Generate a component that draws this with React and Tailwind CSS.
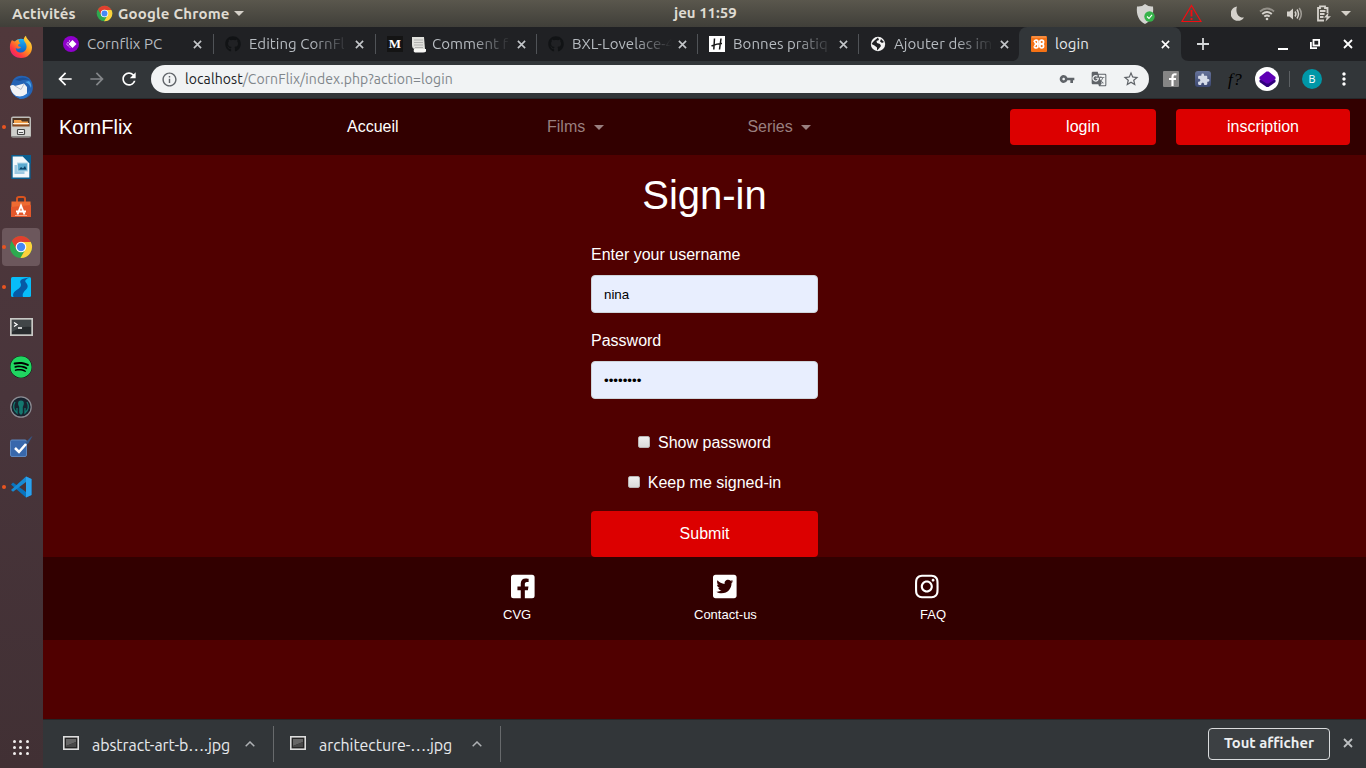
import React from "react";
import {
  FaFacebookSquare,
  FaTwitterSquare,
  FaInstagram,
  FaGithub,
  FaSpotify,
} from "react-icons/fa";
import {
  MdVpnKey,
  MdGTranslate,
  MdStarBorder,
  MdOutlineInfo,
  MdArrowBack,
  MdArrowForward,
  MdRefresh,
  MdMoreVert,
  MdExtension,
} from "react-icons/md";

const UI = "font-['Ubuntu','Noto_Sans',sans-serif]";

function ChromeLogo({ className }) {
  return (
    <svg viewBox="0 0 48 48" className={className}>
      <circle cx="24" cy="24" r="22" fill="#2da94f" />
      <path d="M43.6 14A22 22 0 0 1 22.86 45.97L32.66 29 24 14Z" fill="#fdd23b" />
      <path d="M43.6 14H24L15.34 29 5.54 12.03A22 22 0 0 1 43.6 14Z" fill="#e0402f" />
      <circle cx="24" cy="24" r="10.6" fill="#fff" />
      <circle cx="24" cy="24" r="8.4" fill="#4688f4" />
    </svg>
  );
}

function Cross({ className }) {
  return (
    <svg viewBox="0 0 10 10" className={className} fill="none" stroke="currentColor" strokeWidth="1.8">
      <path d="M1 1L9 9M9 1L1 9" />
    </svg>
  );
}

function TopBar() {
  return (
    <header className={`${UI} flex h-[27px] shrink-0 items-center bg-linear-to-b from-[#5a574d] to-[#403f39] text-[15px] font-bold text-[#dfdbd2]`}>
      <div className="w-[96px] pt-px pl-3 tracking-[0.15px]">Activités</div>
      <ChromeLogo className="h-[17px] w-[17px]" />
      <div className="ml-[5px] w-[111px] pt-px whitespace-nowrap tracking-[0.2px]">Google Chrome</div>
      <svg viewBox="0 0 10 5" className="ml-[5px] h-[5px] w-[10px]"><path d="M0 0H10L5 5Z" fill="#d5d1c9" /></svg>
      <div className="ml-[430px] w-[70px] whitespace-nowrap">jeu 11:59</div>
      <div className="ml-auto flex items-center pr-[15px]">
        <svg viewBox="0 0 20 22" className="h-[22px] w-[20px]">
          <path d="M9 1Q13 4 17 3.5C18 12 15 18 9 21 3 18 0 12 1 3.5Q6 4 9 1Z" fill="#d3d3d0" />
          <circle cx="13.5" cy="13.5" r="5.2" fill="#35b34a" />
          <path d="M11 13.5l2 2 3-3.6" fill="none" stroke="#fff" strokeWidth="1.1" />
        </svg>
        <svg viewBox="0 0 21 19" className="ml-[25px] h-[19px] w-[21px]" fill="none" stroke="#f20d12">
          <path d="M10.5 1.5L20 17.5H1Z" strokeWidth="1.2" />
          <path d="M10.5 6V12.5M10.5 14V16" strokeWidth="1.9" />
        </svg>
        <svg viewBox="0 0 14 15" className="ml-[29px] h-[15px] w-[14px]"><path d="M6 .5A7.2 7.2 0 1 0 13 11.5C8 12.5 3.8 7 6 .5Z" fill="#d5d2cc" /></svg>
        <svg viewBox="0 0 16 14" className="ml-[14px] h-[14px] w-[16px]" fill="none" stroke="#d5d2cc" strokeWidth="1.9">
          <path d="M1 4.5Q8-1.5 15 4.5" opacity=".5" />
          <path d="M3.2 7Q8 3 12.8 7" /><path d="M5.3 9.5Q8 7.3 10.7 9.5" />
          <circle cx="8" cy="12" r="1.3" fill="#d5d2cc" stroke="none" />
        </svg>
        <svg viewBox="0 0 17 14" className="ml-[11px] h-[14px] w-[17px]" fill="none" stroke="#d5d2cc" strokeWidth="1.5">
          <path d="M1 4.5H3.5L7 1.5V12.5L3.5 9.5H1Z" fill="#d5d2cc" stroke="none" />
          <path d="M9 4.5Q10.8 7 9 9.5M11 2.5Q14 7 11 11.5" /><path d="M13.2 1Q17.4 7 13.2 13" opacity=".6" />
        </svg>
        <svg viewBox="0 0 16 17" className="ml-[13px] h-[17px] w-[16px]" fill="none" stroke="#d5d2cc" strokeWidth="1.8">
          <path d="M8 15.5H2V3H4V1.3H9V3H11.5V8" /><path d="M4 6H9.5M4 9H8.5M4 12H7.5" />
          <path d="M12.5 7.5L8 12.5H10.7L9.5 16.5 15 11.2H12Z" fill="#d5d2cc" stroke="none" />
        </svg>
        <svg viewBox="0 0 10 5" className="ml-[9px] h-[5px] w-[10px]"><path d="M0 0H10L5 5Z" fill="#d5d1c9" /></svg>
      </div>
    </header>
  );
}

function FirefoxIcon() {
  return (
    <svg viewBox="0 0 24 24" className="h-[24px] w-[24px]">
      <defs>
        <linearGradient id="ffx" x1="1" y1="0" x2="0.1" y2="1">
          <stop offset="0" stopColor="#fff14a" /><stop offset=".45" stopColor="#ff9a1e" /><stop offset=".75" stopColor="#ff3b3f" /><stop offset="1" stopColor="#e3168b" />
        </linearGradient>
        <linearGradient id="ffb" x1="0" y1="0" x2="0" y2="1"><stop offset="0" stopColor="#1eb5f5" /><stop offset="1" stopColor="#0a4ac0" /></linearGradient>
      </defs>
      <circle cx="12" cy="12.2" r="8.5" fill="url(#ffb)" />
      <path d="M3 5C1 8 .7 11 1 14 2 20 7 23 12 23 19 23 23 18 23 12.500 23 8 20 6 18.500 4 17 2 17 1 17 .8 14 3 14.500 5.500 16.500 8 19 12 17 17.500 12 17.500 8.500 17.500 6.500 15.500 6.800 13 9 14.500 11 13.500 12 12.300 10.500 11.500 9 11.700 9 10 9 9 11 9 11.500 8 10 7.200 9.500 6.600 9.800 4.500 8.500 4.600 7 5.300 6 6.500 4.500 6 3.500 5.800 3 5Z" fill="url(#ffx)" />
    </svg>
  );
}

function ThunderbirdIcon() {
  return (
    <svg viewBox="0 0 25 25" className="h-[25px] w-[25px]">
      <path d="M4 5C7 0 15-.5 20 3 25 8 26 18 18 22.500 12 25.500 3 22 1.500 14 1.200 10 3 8 4 5Z" fill="#2463b5" />
      <path d="M6 5Q14 0 21 5 15 4 11 6Z" fill="#1c4f96" />
      <path d="M16 7Q20 8 22 13 23 9 20 6Z" fill="#48a0e6" />
      <path d="M1 11Q4 9 6 11L15 8.500 18 12 18 19Q14 23 7 21 2 18 1 11Z" fill="#f1f2f5" />
      <path d="M6 11L12 14.500 15 9" fill="none" stroke="#b6bdca" />
      <path d="M4 20Q14 25 21 15 20 24 11 24Z" fill="#2b75cb" />
    </svg>
  );
}

function FilesIcon() {
  return (
    <svg viewBox="0 0 22 22" className="h-[22px] w-[22px]">
      <rect x="1" y=".5" width="20" height="21" rx="2" fill="#bdbdba" />
      <rect x="2.500" y="2" width="17" height="9" fill="#4b3425" />
      <path d="M4 4H11L12 5.500H18V9H4Z" fill="#f3a04a" /><path d="M3 7H19V8.500H3Z" fill="#fff0dc" /><path d="M3 8.500H19V11H3Z" fill="#8a4a20" />
      <path d="M2 10.500H20V20H2Z" fill="#cfcfcc" /><rect x="7.500" y="13.500" width="7" height="5" rx=".8" fill="#eee" stroke="#444" strokeWidth="1.200" /><path d="M9 16.500H13" stroke="#555" />
      <path d="M1.500 20.800H20.500" stroke="#777" />
    </svg>
  );
}

function WriterIcon() {
  return (
    <svg viewBox="0 0 20 24" className="h-[24px] w-[20px]">
      <path d="M1 .7H12L19 8V23.300H1Z" fill="#f3f8fb" stroke="#0b5f90" strokeWidth="1.400" /><path d="M11 0H20V9Z" fill="#0b5f90" />
      <rect x="3.500" y="10" width="10" height="9" fill="#9cc9e3" /><rect x="6.500" y="8" width="10" height="8" fill="#5ba9cf" stroke="#b3d7e8" />
      <path d="M8 14.500L10 12 12 13.500 14 11 15.500 14.500Z" fill="#083f65" />
    </svg>
  );
}

function StoreIcon() {
  return (
    <svg viewBox="0 0 22 22" className="h-[22px] w-[22px]">
      <path d="M7 6V2.500Q7 1 9 1H13Q15 1 15 2.500V6" fill="none" stroke="#d9531e" strokeWidth="2" />
      <path d="M1.500 5.500H20.500L21 21H1Z" fill="#ee6b32" /><path d="M1 11L21 9V21H1Z" fill="#e3572a" />
      <path d="M7.500 18.500L11 9.500 14.500 18.500M6 15.500H16" fill="none" stroke="#fff" strokeWidth="1.900" /><path d="M5 19.500H17" stroke="#f5aa8c" />
    </svg>
  );
}

function RiverIcon() {
  return (
    <svg viewBox="0 0 20 20" className="h-[20px] w-[20px]">
      <rect width="20" height="20" rx="1.500" fill="#08bdf9" />
      <path d="M19 .5C12 1 8 3 9.500 6 11 9 9 11 5 13.500 2 15.500 1.500 18 2.500 20H12C11 16.500 13 14.500 15.500 12 18 9 16 7 14.500 5 13.500 3 16 1.500 19 .5Z" fill="#075aa5" />
    </svg>
  );
}

function TerminalIcon() {
  return (
    <svg viewBox="0 0 23 18" className="h-[18px] w-[23px]">
      <rect x=".8" y=".8" width="21.400" height="16.400" fill="#282c2e" stroke="#c8c8c5" strokeWidth="1.800" />
      <path d="M2 2H21V9Q11 8 2 14Z" fill="#414648" /><path d="M4 4.500L7 6.500 4 8.500M8 10H12" fill="none" stroke="#fff" strokeWidth="1.300" />
    </svg>
  );
}

function KrakenIcon() {
  return (
    <svg viewBox="0 0 22 22" className="h-[22px] w-[22px]" fill="none">
      <circle cx="11" cy="11" r="10.200" fill="#17232f" stroke="#8d8d94" strokeWidth="1.200" />
      <path d="M11 4.500C7.500 4.500 7.500 8 9.200 11V17L11 19 12.800 17V11C14.500 8 14.500 4.500 11 4.500Z" fill="#14786f" />
      <path d="M5 6Q1.500 12 7 17V12M17 6Q20.500 12 15 17V12" stroke="#14786f" strokeWidth="1.300" />
    </svg>
  );
}

function TodoIcon() {
  return (
    <svg viewBox="0 0 24 22" className="h-[22px] w-[24px]">
      <rect x="1.500" y="4" width="16" height="16.500" rx="1.500" fill="#3868ac" stroke="#5d87bf" />
      <path d="M16 7L22 1 23.500 0 19 8Z" fill="#345a8c" /><path d="M6 12L10 16 17 8" fill="none" stroke="#fff" strokeWidth="2.500" />
    </svg>
  );
}

function CodeIcon() {
  return (
    <svg viewBox="0 0 22 22" className="h-[22px] w-[22px]">
      <path d="M16 .5L21.500 3V19L16 21.500 1 8.500 3 6.500 16 16Z" fill="#0873bd" />
      <path d="M1 14L16 .5V6L3 15.800Z" fill="#168bd5" /><path d="M16 .5L21.500 3V19L16 21.500Z" fill="#2ba2ee" />
    </svg>
  );
}

const dock = [
  { icon: <FirefoxIcon /> },
  { icon: <ThunderbirdIcon /> },
  { icon: <FilesIcon />, running: true },
  { icon: <WriterIcon /> },
  { icon: <StoreIcon /> },
  { icon: <ChromeLogo className="h-[24px] w-[24px]" />, running: true, active: true },
  { icon: <RiverIcon />, running: true },
  { icon: <TerminalIcon /> },
  { icon: <div className="rounded-full bg-black"><FaSpotify className="h-[22px] w-[22px] text-[#20d661]" /></div> },
  { icon: <KrakenIcon /> },
  { icon: <TodoIcon /> },
  { icon: <CodeIcon />, running: true },
];

function Dock() {
  return (
    <aside className="flex w-[43px] shrink-0 flex-col bg-linear-to-b from-[#50383b] via-[#49353b] to-[#413034]">
      {dock.map((d, i) => (
        <div key={i} className="flex h-[40px] shrink-0 items-center pl-[2px]">
          <div className={`relative flex h-[38px] w-[38px] items-center justify-center rounded-[4px] ${d.active ? "bg-[#6c575c]" : ""}`}>
            {d.running && <span className="absolute top-[17px] left-0 h-[4px] w-[4px] rounded-full bg-[#e95420]" />}
            {d.icon}
          </div>
        </div>
      ))}
      <div className="mt-auto mb-[13px] ml-[13px] grid w-[16px] grid-cols-3 gap-[3px]">
        {Array.from({ length: 9 }, (_, i) => <span key={i} className="h-[3px] w-[3px] rounded-full bg-[#f1eeee]" />)}
      </div>
    </aside>
  );
}

const tabs = [
  {
    title: "Cornflix PC",
    width: "w-[162px]",
    icon: (
      <svg viewBox="0 0 16 16" className="h-4 w-4 shrink-0"><circle cx="8" cy="8" r="8" fill="#8f00cc" /><path d="M9.500 4L13.500 8 9.500 12 5.500 8Z" fill="#fff" /><path d="M7 4.500L3.500 8 7 11.500" fill="none" stroke="#fff" strokeDasharray="1.500 .7" /></svg>
    ),
  },
  { title: "Editing CornFl", fade: true, width: "w-[162px]", icon: <FaGithub className="h-4 w-4 shrink-0 text-[#111315]" /> },
  {
    title: "Comment f",
    fade: true,
    width: "w-[161px]",
    page: true,
    icon: <div className="flex h-4 w-4 shrink-0 items-center justify-center bg-[#141414] font-['Liberation_Serif',serif] text-[13px] font-bold text-white">M</div>,
  },
  { title: "BXL-Lovelace-4", fade: true, width: "w-[161px]", icon: <FaGithub className="h-4 w-4 shrink-0 text-[#111315]" /> },
  {
    title: "Bonnes pratiq",
    fade: true,
    width: "w-[161px]",
    icon: <svg viewBox="0 0 16 16" className="h-4 w-4 shrink-0"><rect width="16" height="16" fill="#fff" /><path d="M5.500 2.500L4.800 13.500M12 2.500L10.500 13.500M2.500 10Q8 7.500 13 7.500" fill="none" stroke="#161616" strokeWidth="1.500" /></svg>,
  },
  {
    title: "Ajouter des im",
    fade: true,
    width: "w-[161px]",
    icon: <svg viewBox="0 0 16 16" className="h-4 w-4 shrink-0"><circle cx="8" cy="8" r="7.200" fill="#f3f3f3" /><path d="M8 1.500L9 4 6.500 5 7 7 10 8 11 10 9 12.500 7 14.500 7 11.500 4.500 9.500 1.500 8 3 6 5 4ZM11 3L14 6 12 7 10 5.500Z" fill="#202124" /></svg>,
  },
  {
    title: "login",
    active: true,
    width: "w-[162px]",
    icon: (
      <svg viewBox="0 0 16 16" className="h-4 w-4 shrink-0">
        <rect width="16" height="16" rx="1" fill="#f57215" />
        <path d="M1 1H15" stroke="#f9a669" />
        <g fill="none" stroke="#fff" strokeWidth="1.700">
          <circle cx="10.700" cy="6" r="1.900" /><circle cx="10.700" cy="10.100" r="1.900" />
          <path d="M3.200 6Q3.400 4.100 5.200 4.100 7 4.100 7 6 7 8 4.800 8 7 8 7 10.100 7 12 5.200 12 3.400 12 3.200 10.100M3.500 6L5 8 3.500 10M7 8H9" />
        </g>
      </svg>
    ),
  },
];

function PageEmoji() {
  return (
    <svg viewBox="0 0 16 17" className="mr-[5px] h-[17px] w-[16px] shrink-0">
      <path d="M1 1H13L14 13H4Q1 13 1 9Z" fill="#e0e0dc" /><path d="M3 13H15V15.500Q14 16.500 12 16.500H4Q2 16 3 13Z" fill="#f8f8f5" /><path d="M3 4H12M3 6.500H12M3 9H12M4 11.500H12" stroke="#a6a6a5" strokeWidth=".8" />
    </svg>
  );
}

function TabStrip() {
  return (
    <div className={`${UI} flex h-[34px] shrink-0 bg-[#202124] pl-2 text-[15px]`}>
      {tabs.map((t) => (
        <div
          key={t.title}
          className={`relative flex shrink-0 items-center ${t.width} ${t.active ? "rounded-t-[8px] bg-[#323639] text-[#e6e8ea]" : "text-[#b6bbc0]"}`}
        >
          <div className={`mr-[11px] h-[20px] w-px ${t.fade ? "bg-[#505357]" : ""}`} />
          {t.icon}
          <div className={`ml-[8px] flex w-[100px] items-center whitespace-nowrap tracking-[0.05px] ${t.fade ? "mask-r-from-62% mask-r-to-100%" : ""}`}>
            {t.page && <PageEmoji />}
            {t.title}
          </div>
          <Cross className={`ml-[5.500px] h-[9px] w-[9px] ${t.active ? "text-white" : "text-[#c3c6c9]"}`} />
          {t.active && (
            <>
              <svg viewBox="0 0 8 8" className="absolute bottom-0 -left-2 h-2 w-2"><path d="M8 0V8H0Q8 8 8 0Z" fill="#323639" /></svg>
              <svg viewBox="0 0 8 8" className="absolute -right-2 bottom-0 h-2 w-2"><path d="M0 0V8H8Q0 8 0 0Z" fill="#323639" /></svg>
            </>
          )}
        </div>
      ))}
      <div className="flex flex-1 items-center">
        <svg viewBox="0 0 12 12" className="ml-[16px] h-3 w-3"><path d="M6 0V12M0 6H12" stroke="#d5d8da" strokeWidth="1.800" /></svg>
        <div className="mt-[9px] ml-[69px] h-[2px] w-[10px] bg-white" />
        <svg viewBox="0 0 10 10" className="ml-[22px] h-[10px] w-[10px]" fill="none" stroke="#fff" strokeWidth="1.800"><rect x="3.500" y=".9" width="5.600" height="5.600" /><path d="M.9 3V9.100H7" /></svg>
        <Cross className="ml-[23px] h-[10px] w-[10px] text-white" />
      </div>
    </div>
  );
}

function Toolbar() {
  return (
    <div className={`${UI} flex h-[38px] shrink-0 items-center border-b border-[#25282a] bg-[#323639] pb-px`}>
      <MdArrowBack className="ml-[12px] h-[20px] w-[20px] text-white" />
      <MdArrowForward className="ml-[12px] h-[20px] w-[20px] text-[#84878a]" />
      <MdRefresh className="ml-[12px] h-[20px] w-[20px] text-white" />
      <div className="ml-[12px] flex h-[28px] w-[998px] items-center rounded-full bg-[#f1f3f4] pr-[9px] pl-[10px] text-[14px] text-[#80868b]">
        <MdOutlineInfo className="h-[17px] w-[17px] text-[#5f6368]" />
        <div className="ml-[7px] whitespace-nowrap tracking-[0.09px]"><span className="text-[#202124]">localhost</span>/CornFlix/index.php?action=login</div>
        <MdVpnKey className="ml-auto h-[16px] w-[16px] text-[#5f6368]" />
        <MdGTranslate className="ml-[16px] h-[16px] w-[16px] text-[#5f6368]" />
        <MdStarBorder className="ml-[15px] h-[18px] w-[18px] text-[#5f6368]" />
      </div>
      <svg viewBox="0 0 16 16" className="ml-[14px] h-4 w-4"><rect width="16" height="16" rx="1" fill="#858585" /><path d="M13.500 3.500Q9.500 2.500 9.500 6V15M6 8H13" fill="none" stroke="#fff" strokeWidth="2.200" /></svg>
      <div className="ml-[16px] flex h-4 w-4 items-center justify-center rounded-[3px] bg-linear-to-b from-[#66739a] to-[#3b4770]"><MdExtension className="h-[13px] w-[13px] text-[#d5dbe8]" /></div>
      <div className="ml-[17px] w-[16px] font-['Liberation_Serif',serif] text-[17px] leading-none tracking-[0.5px] text-black italic">f?</div>
      <div className="ml-[11px] flex h-6 w-6 items-center justify-center rounded-full bg-white">
        <svg viewBox="0 0 17 17" className="h-[17px] w-[17px]"><path d="M.5 9L2.500 8H14.500L16.500 9V11L9.500 16H7.500L.5 11Z" fill="#31007c" /><path d="M7.500 .5H9.500L16.500 6V8L9.500 12.500H7.500L.5 8V6Z" fill="#5f00b5" /></svg>
      </div>
      <div className="ml-[10px] h-4 w-px bg-[#5c6063]" />
      <div className="ml-[12px] flex h-[20px] w-[20px] items-center justify-center rounded-full bg-[#0097a7] text-[11px] text-white">B</div>
      <MdMoreVert className="ml-[12px] h-[20px] w-[20px] text-white" />
    </div>
  );
}

function Caret() {
  return <svg viewBox="0 0 10 5" className="ml-[8.500px] h-[5px] w-[10px]"><path d="M0 0H10L5 5Z" fill="currentColor" /></svg>;
}

function Navbar() {
  return (
    <nav className="flex h-[56px] shrink-0 items-center bg-[#320000] pr-4 pl-4">
      <div className="w-[288px] text-[20px]">KornFlix</div>
      <div className="w-[200px]">Accueil</div>
      <div className="flex w-[200.4px] items-center text-[#997f7f]">Films<Caret /></div>
      <div className="flex items-center text-[#997f7f]">Series<Caret /></div>
      <button className="ml-auto h-[36px] w-[146px] rounded-[4px] bg-[#dc0000]">login</button>
      <button className="ml-5 h-[36px] w-[174px] rounded-[4px] bg-[#dc0000]">inscription</button>
    </nav>
  );
}

function Box() {
  return <span className="mb-[2px] h-[12px] w-[12px] rounded-[2px] border border-[#b9b4b4] bg-linear-to-b from-[#efefef] to-[#dadada]" />;
}

function SignIn() {
  const field = "h-[38px] w-full rounded-[4px] border border-[#ced4da] bg-[#e8eefe] px-3 text-[13.333px] text-black outline-none";
  return (
    <form className="mx-auto flex w-[227px] flex-col pt-4">
      <h1 className="text-center text-[40px] leading-[48px]">Sign-in</h1>
      <label className="mt-[24px] leading-6">Enter your username</label>
      <input className={`${field} mt-[8px]`} defaultValue="nina" />
      <label className="mt-[16px] leading-6">Password</label>
      <input type="password" className={`${field} mt-[8px]`} defaultValue="password" />
      <label className="mt-[32px] flex items-center justify-center gap-2 leading-6"><Box />Show password</label>
      <label className="mt-4 flex items-center justify-center gap-2 leading-6"><Box />Keep me signed-in</label>
      <button type="button" className="mt-4 h-[46px] rounded-[4px] bg-[#dc0000]">Submit</button>
    </form>
  );
}

function Footer() {
  return (
    <footer className="h-[83px] shrink-0 bg-[#320000] pt-4 text-[13px]">
      <div className="flex gap-[178.4px] pl-[468px]">
        <FaFacebookSquare className="h-[27px] w-[23.6px]" />
        <FaTwitterSquare className="h-[27px] w-[23.6px]" />
        <FaInstagram className="h-[27px] w-[23.6px]" />
      </div>
      <div className="mt-[5px] flex pl-[460px] leading-5">
        <span className="w-[191px]">CVG</span>
        <span className="w-[226px]">Contact-us</span>
        <span>FAQ</span>
      </div>
    </footer>
  );
}

function Download({ name }) {
  return (
    <div className="flex h-[36px] items-center border-r border-[#676a6c] text-[#e8eaed]">
      <svg viewBox="0 0 16 14" className="mb-[2px] h-[14px] w-[16px]"><rect x=".8" y=".8" width="14.400" height="12.400" fill="#252525" stroke="#ddd" strokeWidth="1.600" /><path d="M3 3H13V6L3 10Z" fill="#666" /><path d="M3 10L13 6V11H3Z" fill="#484848" /></svg>
      <div className="mt-[2px] ml-[13px] w-[144px] whitespace-nowrap tracking-[-0.07px]">{name}</div>
      <svg viewBox="0 0 10 6" className="mr-[18px] ml-[9px] h-[6px] w-[10px]"><path d="M.7 5.300L5 1 9.300 5.300" fill="none" stroke="#aeb1b4" strokeWidth="1.500" /></svg>
    </div>
  );
}

function DownloadBar() {
  return (
    <div className={`${UI} flex h-[49px] shrink-0 items-center border-t border-[#242627] bg-[#323639] pl-5 text-[16px]`}>
      <Download name="abstract-art-b….jpg" />
      <div className="w-4" />
      <Download name="architecture-….jpg" />
      <button className="mb-px ml-auto h-[32px] w-[122px] rounded-[4px] border border-[#d9dbdd] bg-[#3c4043] text-[14.8px] font-bold whitespace-nowrap text-[#eceef0]">Tout afficher</button>
      <Cross className="mr-[13px] mb-[2px] ml-[13px] h-[10px] w-[10px] text-[#bdc0c2]" />
    </div>
  );
}

export default function App() {
  return (
    <div className="flex h-[768px] w-[1366px] flex-col overflow-hidden">
      <TopBar />
      <div className="flex min-h-0 flex-1">
        <Dock />
        <div className="flex min-w-0 flex-1 flex-col">
          <TabStrip />
          <Toolbar />
          <main className="flex min-h-0 flex-1 flex-col bg-[#500000] font-['Liberation_Sans',Arial,sans-serif] text-[16px] text-white">
            <Navbar />
            <SignIn />
            <Footer />
          </main>
          <DownloadBar />
        </div>
      </div>
    </div>
  );
}
